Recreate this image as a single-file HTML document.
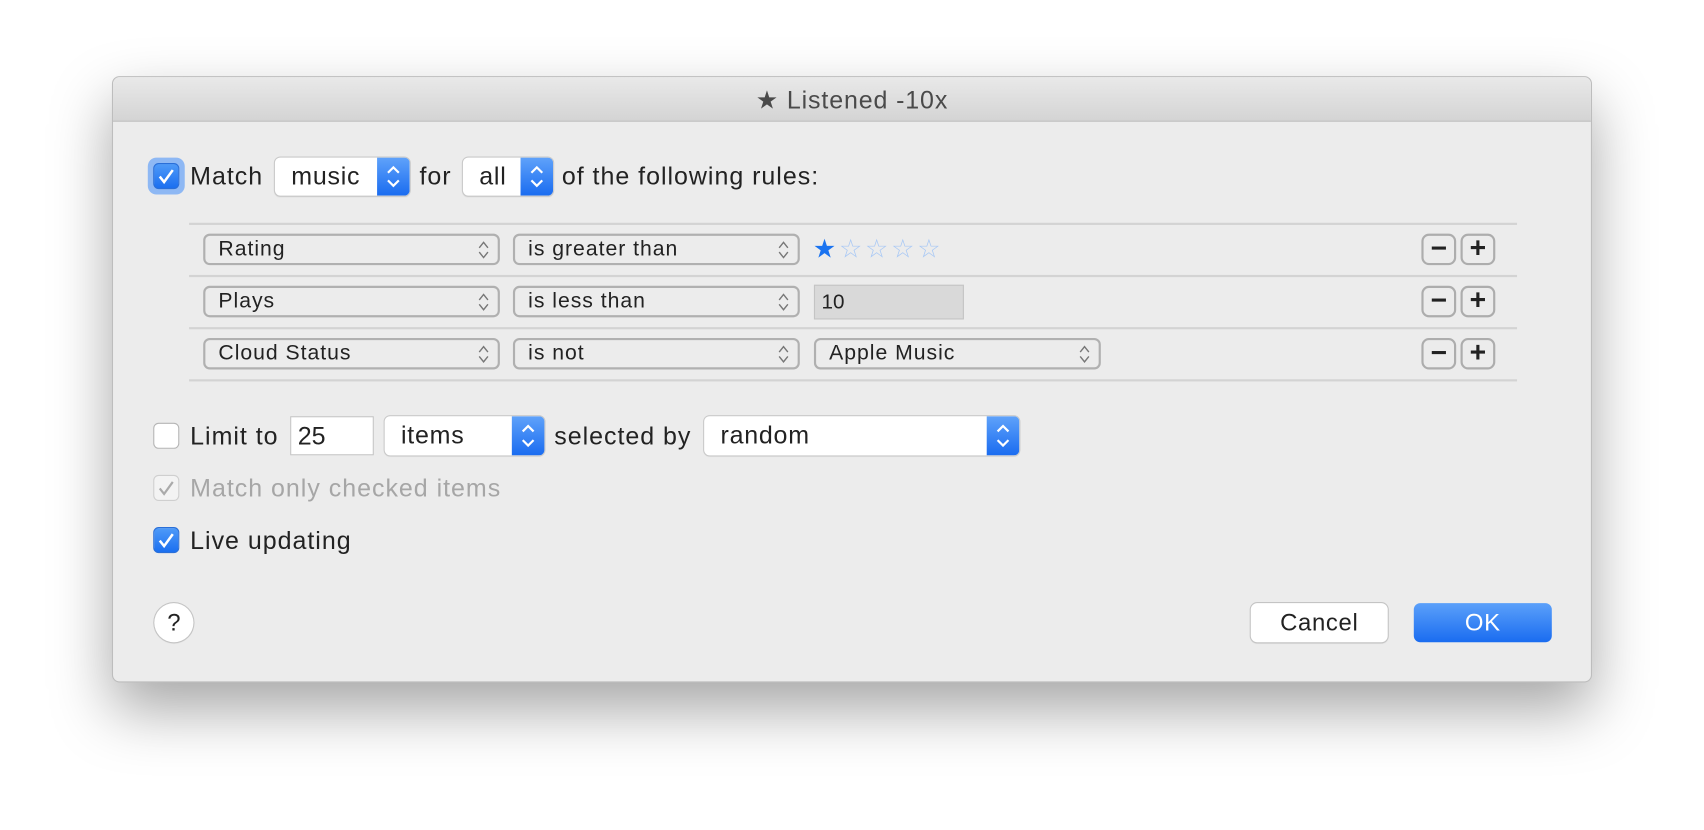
<!DOCTYPE html>
<html><head><meta charset="utf-8"><style>
html,body{margin:0;padding:0;background:#fff;width:1704px;height:830px;overflow:hidden;font-family:"Liberation Sans",sans-serif;color:#222}
#s{position:absolute;left:0;top:0;width:1568px;height:764px;transform:scale(1.0867);transform-origin:0 0}
.a{position:absolute}
#win{left:103px;top:70px;width:1362px;height:558px;background:#ececec;border-radius:7px;border:1px solid #bdbdbd;box-sizing:border-box;box-shadow:0 25px 55px rgba(0,0,0,.35);overflow:hidden}
#tb{left:0;top:0;width:100%;height:40px;background:linear-gradient(#e9e9e9,#d4d4d4);border-bottom:1px solid #bcbcbc;text-align:center;line-height:42px;font-size:23px;letter-spacing:0.8px;color:#4a4a4a}
.t{font-size:23px;letter-spacing:0.9px;line-height:26px;white-space:nowrap}
.cb{width:24px;height:24px;border-radius:5px;box-sizing:border-box}
.cb.on{background:linear-gradient(#4e9af8,#1b6ff0);border:1px solid #2a6fd8}
.cb.off{background:#fff;border:1px solid #b5b5b5}
.cb.dis{background:#f3f3f3;border:1px solid #cfcfcf}
.pu{background:#fff;border-radius:5px;box-shadow:0 0 0 1px #c9c9c9,0 1px 1px rgba(0,0,0,.15);box-sizing:border-box;font-size:23px;letter-spacing:0.7px;line-height:35px;padding-left:15px;overflow:hidden}
.bl{position:absolute;right:0;top:0;width:30px;height:100%;background:linear-gradient(#5fa2fa,#1a6cf0)}
.rp{border:2px solid #b0b0b0;border-radius:6px;box-sizing:border-box;height:29px;font-size:19.5px;letter-spacing:0.9px;line-height:25px;padding-left:12px;background:#ececec}
.ar{position:absolute;right:8px;top:4px}
.ln{left:70px;width:1222px;height:2px;background:#d3d3d3}
.pm{width:32px;height:29px;border:2px solid #adadad;border-radius:7px;box-sizing:border-box;font-weight:bold;font-size:26px;text-align:center;line-height:23px;color:#222}
.btn{height:36px;border-radius:6px;font-size:22px;letter-spacing:0.6px;text-align:center;line-height:36px;box-sizing:border-box}
</style></head><body><div id="s">
<div id="win" class="a">
<div id="tb" class="a">★ Listened -10x</div>
<div class="a" style="left:32px;top:74px;width:34px;height:34px;border-radius:8px;background:#8eb8f4"></div>
<div class="a cb on" style="left:37px;top:79px"></div>
<svg class="a" style="left:37px;top:79px" width="24" height="24"><path d="M6 12.5l4 5 8-11" stroke="#fff" stroke-width="2.3" fill="none"/></svg>
<div class="a t" style="left:71px;top:78px">Match</div>
<div class="a pu" style="left:149px;top:74px;width:124px;height:35px">music<div class="bl"><svg width="30" height="35"><path d="M10 14l5-5 5 5M10 21l5 5 5-5" stroke="#fff" stroke-width="2" fill="none"/></svg></div></div>
<div class="a t" style="left:282px;top:78px">for</div>
<div class="a pu" style="left:322px;top:74px;width:83px;height:35px">all<div class="bl"><svg width="30" height="35"><path d="M10 14l5-5 5 5M10 21l5 5 5-5" stroke="#fff" stroke-width="2" fill="none"/></svg></div></div>
<div class="a t" style="left:413px;top:78px">of the following rules:</div>

<div class="a ln" style="top:134px"></div>
<div class="a ln" style="top:182px"></div>
<div class="a ln" style="top:230px"></div>
<div class="a ln" style="top:278px"></div>

<div class="a rp" style="left:83px;top:144px;width:273px">Rating<svg class="ar" width="10" height="18"><path d="M1 7l4-5 4 5M1 11l4 5 4-5" stroke="#777" stroke-width="1.3" fill="none"/></svg></div>
<div class="a rp" style="left:368px;top:144px;width:264px">is greater than<svg class="ar" width="10" height="18"><path d="M1 7l4-5 4 5M1 11l4 5 4-5" stroke="#777" stroke-width="1.3" fill="none"/></svg></div>
<div class="a" style="left:644px;top:145px;font-size:24px;line-height:28px;color:#1a73f0;letter-spacing:2.5px">★<span style="color:#a8c8f5">☆☆☆☆</span></div>
<div class="a pm" style="left:1204px;top:144px">−</div><div class="a pm" style="left:1240px;top:144px">+</div>

<div class="a rp" style="left:83px;top:192px;width:273px">Plays<svg class="ar" width="10" height="18"><path d="M1 7l4-5 4 5M1 11l4 5 4-5" stroke="#777" stroke-width="1.3" fill="none"/></svg></div>
<div class="a rp" style="left:368px;top:192px;width:264px">is less than<svg class="ar" width="10" height="18"><path d="M1 7l4-5 4 5M1 11l4 5 4-5" stroke="#777" stroke-width="1.3" fill="none"/></svg></div>
<div class="a" style="left:645px;top:191px;width:138px;height:32px;background:#d9d9d9;border:1px solid #c4c4c4;box-sizing:border-box;font-size:19px;line-height:31px;padding-left:6px">10</div>
<div class="a pm" style="left:1204px;top:192px">−</div><div class="a pm" style="left:1240px;top:192px">+</div>

<div class="a rp" style="left:83px;top:240px;width:273px">Cloud Status<svg class="ar" width="10" height="18"><path d="M1 7l4-5 4 5M1 11l4 5 4-5" stroke="#777" stroke-width="1.3" fill="none"/></svg></div>
<div class="a rp" style="left:368px;top:240px;width:264px">is not<svg class="ar" width="10" height="18"><path d="M1 7l4-5 4 5M1 11l4 5 4-5" stroke="#777" stroke-width="1.3" fill="none"/></svg></div>
<div class="a rp" style="left:645px;top:240px;width:264px">Apple Music<svg class="ar" width="10" height="18"><path d="M1 7l4-5 4 5M1 11l4 5 4-5" stroke="#777" stroke-width="1.3" fill="none"/></svg></div>
<div class="a pm" style="left:1204px;top:240px">−</div><div class="a pm" style="left:1240px;top:240px">+</div>

<div class="a cb off" style="left:37px;top:318px"></div>
<div class="a t" style="left:71px;top:317px">Limit to</div>
<div class="a" style="left:163px;top:312px;width:77px;height:36px;background:#fff;border:1px solid #c4c4c4;box-sizing:border-box;font-size:23px;line-height:34px;padding-left:6px">25</div>
<div class="a pu" style="left:250px;top:312px;width:147px;height:36px">items<div class="bl"><svg width="30" height="36"><path d="M10 14l5-5 5 5M10 22l5 5 5-5" stroke="#fff" stroke-width="2" fill="none"/></svg></div></div>
<div class="a t" style="left:406px;top:317px">selected by</div>
<div class="a pu" style="left:544px;top:312px;width:290px;height:36px">random<div class="bl"><svg width="30" height="36"><path d="M10 14l5-5 5 5M10 22l5 5 5-5" stroke="#fff" stroke-width="2" fill="none"/></svg></div></div>

<div class="a cb dis" style="left:37px;top:366px"></div>
<svg class="a" style="left:37px;top:366px" width="24" height="24"><path d="M6 12.5l4 5 8-11" stroke="#aaa" stroke-width="2" fill="none"/></svg>
<div class="a t" style="left:71px;top:365px;color:#a6a6a6">Match only checked items</div>

<div class="a cb on" style="left:37px;top:414px"></div>
<svg class="a" style="left:37px;top:414px" width="24" height="24"><path d="M6 12.5l4 5 8-11" stroke="#fff" stroke-width="2.3" fill="none"/></svg>
<div class="a t" style="left:71px;top:413px">Live updating</div>

<div class="a" style="left:38px;top:484px;width:36px;height:36px;border-radius:50%;background:#fff;box-shadow:0 0 0 1px #c4c4c4,0 1px 1px rgba(0,0,0,.15);text-align:center;line-height:36px;font-size:22px">?</div>
<div class="a btn" style="left:1047px;top:484px;width:126px;background:#fff;box-shadow:0 0 0 1px #c4c4c4,0 1px 1px rgba(0,0,0,.15)">Cancel</div>
<div class="a btn" style="left:1197px;top:484px;width:127px;background:linear-gradient(#5ba0fa,#1a6cf0);color:#fff">OK</div>
</div>
</div></body></html>
